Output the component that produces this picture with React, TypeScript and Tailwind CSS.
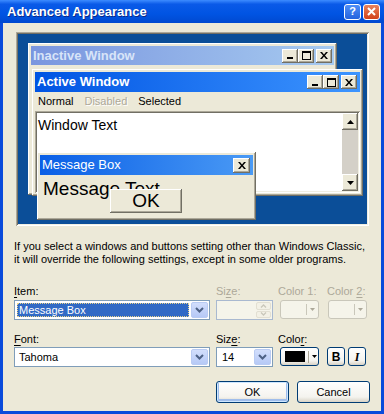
import React from 'react';

const raised =
  'shadow-[inset_-1px_-1px_0_#716f64,inset_1px_1px_0_#fff,inset_-2px_-2px_0_#aca899]';
const sunken =
  'shadow-[inset_1px_1px_0_#aca899,inset_-1px_-1px_0_#fff,inset_2px_2px_0_#716f64,inset_-2px_-2px_0_#f1efe2]';
const xpButton =
  'rounded-[3px] border border-[#003c74] bg-[linear-gradient(to_bottom,#ffffff,#f4f3ee_75%,#d8d3c6)] flex items-center justify-center';

function MinGlyph() {
  return (
    <svg width="8" height="7" viewBox="0 0 8 7">
      <rect x="1" y="5" width="6" height="2" fill="#000" />
    </svg>
  );
}

function MaxGlyph() {
  return (
    <svg width="9" height="9" viewBox="0 0 9 9">
      <path d="M0 0h9v9H0z M1 2h7v6H1z" fillRule="evenodd" fill="#000" />
    </svg>
  );
}

function CloseGlyph() {
  return (
    <svg width="8" height="7" viewBox="0 0 8 7">
      <path d="M0 0h2l2 2.4L6 0h2L5 3.5 8 7H6L4 4.6 2 7H0l3-3.5z" fill="#000" />
    </svg>
  );
}

function CapBtn({ children, className = '' }: { children: React.ReactNode; className?: string }) {
  return (
    <div className={`w-[16px] h-[14px] bg-[#ece9d8] ${raised} flex items-center justify-center ${className}`}>
      {children}
    </div>
  );
}

function Chevron() {
  return (
    <svg width="9" height="6" viewBox="0 0 9 6">
      <path d="M1 1l3.5 3.5L8 1" stroke="#4d6185" strokeWidth="2" fill="none" />
    </svg>
  );
}

function DropBtn() {
  return (
    <div className="w-[17px] h-[16px] m-[1px] rounded-[2px] border border-[#b9cbf3] bg-[linear-gradient(to_bottom,#d2defc,#b6c9f6)] flex items-center justify-center">
      <Chevron />
    </div>
  );
}

function U({ children }: { children: React.ReactNode }) {
  return <span className="underline underline-offset-2">{children}</span>;
}

export default function App() {
  return (
    <div className="w-[384px] h-[414px] flex flex-col bg-[#0a4bdb] font-['Liberation_Sans',Arial,sans-serif] overflow-hidden">
      {/* title bar */}
      <div className="h-[23px] flex items-center pl-[7px] pr-[4px] bg-[linear-gradient(to_bottom,#3d8cff_0%,#0a5ae8_18%,#0054e3_60%,#0049d0_100%)]">
        <span className="text-white text-[13px] font-bold [text-shadow:1px_1px_0_#0a2a8a]">Advanced Appearance</span>
        <div className="ml-auto flex gap-[2px]">
          <div className="w-[17px] h-[16px] rounded-[3px] border border-white bg-[linear-gradient(to_bottom,#4f8ef7,#2463de)] flex items-center justify-center text-white text-[11px] font-bold">
            ?
          </div>
          <div className="w-[17px] h-[16px] rounded-[3px] border border-white bg-[linear-gradient(to_bottom,#e8825c,#d2421b)] flex items-center justify-center">
            <svg width="9" height="9" viewBox="0 0 9 9">
              <path d="M1 1l7 7M8 1L1 8" stroke="#fff" strokeWidth="2" />
            </svg>
          </div>
        </div>
      </div>

      {/* body */}
      <div className="flex-1 mx-[3px] mb-[3px] bg-[#ece9d8] flex flex-col text-[11px] text-black">
        {/* preview */}
        <div className={`relative ml-[13px] mt-[9px] w-[353px] h-[194px] bg-[#0b4e98] ${sunken}`}>
          {/* inactive window */}
          <div className={`absolute left-[12px] top-[11px] w-[309px] h-[152px] bg-[#ece9d8] p-[3px] ${raised}`}>
            <div className="h-[19px] flex items-center pl-[2px] pr-[2px] bg-[linear-gradient(to_right,#7a96df,#a6caf0)]">
              <span className="text-[#d8e4f8] text-[13px] font-bold">Inactive Window</span>
              <div className="ml-auto flex items-center">
                <CapBtn>
                  <MinGlyph />
                </CapBtn>
                <CapBtn>
                  <MaxGlyph />
                </CapBtn>
                <CapBtn className="ml-[2px]">
                  <CloseGlyph />
                </CapBtn>
              </div>
            </div>
          </div>

          {/* active window */}
          <div className={`absolute left-[16px] top-[37px] w-[331px] h-[127px] bg-[#ece9d8] p-[3px] flex flex-col ${raised}`}>
            <div className="h-[20px] flex items-center pl-[2px] pr-[3px] bg-[linear-gradient(to_right,#0054e3,#3d95ff)]">
              <span className="text-white text-[13px] font-bold">Active Window</span>
              <div className="ml-auto flex items-center">
                <CapBtn>
                  <MinGlyph />
                </CapBtn>
                <CapBtn>
                  <MaxGlyph />
                </CapBtn>
                <CapBtn className="ml-[2px]">
                  <CloseGlyph />
                </CapBtn>
              </div>
            </div>
            <div className="h-[19px] flex items-center gap-[11px] pl-[3px] text-[11px]">
              <span>Normal</span>
              <span className="text-[#aca899] [text-shadow:1px_1px_0_#fff]">Disabled</span>
              <span>Selected</span>
            </div>
            <div className={`flex-1 bg-white p-[2px] flex ${sunken}`}>
              <div className="flex-1 pl-[1px] pt-[4px] text-[14px] leading-[17px]">Window Text</div>
              <div className="w-[16px] flex flex-col bg-[#d4d0c8]">
                <div className={`h-[17px] bg-[#ece9d8] ${raised} flex items-center justify-center`}>
                  <svg width="7" height="4" viewBox="0 0 7 4">
                    <path d="M3.5 0L7 4H0z" fill="#000" />
                  </svg>
                </div>
                <div className="flex-1" />
                <div className={`h-[17px] bg-[#ece9d8] ${raised} flex items-center justify-center`}>
                  <svg width="7" height="4" viewBox="0 0 7 4">
                    <path d="M0 0h7L3.5 4z" fill="#000" />
                  </svg>
                </div>
              </div>
            </div>
          </div>

          {/* message box */}
          <div className={`absolute left-[21px] top-[120px] w-[219px] h-[68px] bg-[#ece9d8] p-[3px] flex flex-col ${raised}`}>
            <div className="h-[20px] flex items-center pl-[2px] pr-[3px] bg-[linear-gradient(to_right,#0a5fe6,#4a9af5)]">
              <span className="text-white text-[13px]">Message Box</span>
              <CapBtn className="ml-auto w-[17px] h-[15px]">
                <CloseGlyph />
              </CapBtn>
            </div>
            <div className="relative flex-1">
              <div className="pl-[3px] pt-[3px] text-[19px] leading-[22px]">Message Text</div>
              <div className={`absolute left-[70px] top-[14px] w-[72px] h-[24px] bg-[#ece9d8] ${raised} flex items-center justify-center text-[19px]`}>
                OK
              </div>
            </div>
          </div>
        </div>

        {/* info text */}
        <p className="mt-[14px] pl-[11px] leading-[13px]">
          If you select a windows and buttons setting other than Windows Classic,
          <br />
          it will override the following settings, except in some older programs.
        </p>

        {/* row 1 */}
        <div className="mt-[19px] pl-[11px] flex">
          <div className="w-[196px]">
            <div className="leading-[13px]">
              <U>I</U>tem:
            </div>
            <div className="mt-[2px] h-[20px] border border-[#7f9db9] bg-white flex items-center">
              <div className="flex-1 ml-[2px] mr-[1px] h-[14px] bg-[#316ac5] text-white border border-dotted border-[#e8d38a] flex items-center pl-[1px] leading-none">
                Message Box
              </div>
              <DropBtn />
            </div>
          </div>
          <div className="ml-[6px] w-[57px]">
            <div className="leading-[13px] text-[#aca899]">
              Si<U>z</U>e:
            </div>
            <div className="mt-[2px] h-[20px] border border-[#a9b9d0] bg-[#f5f4ea] flex justify-end">
              <div className="w-[15px] m-[1px] flex flex-col gap-[1px]">
                <div className="flex-1 rounded-[2px] bg-[#f3f1e6] border border-[#e2dfd2] flex items-center justify-center">
                  <svg width="7" height="4" viewBox="0 0 7 4">
                    <path d="M1 3.5l2.5-2.5L6 3.5" stroke="#c9c7ba" strokeWidth="1.3" fill="none" />
                  </svg>
                </div>
                <div className="flex-1 rounded-[2px] bg-[#f3f1e6] border border-[#e2dfd2] flex items-center justify-center">
                  <svg width="7" height="4" viewBox="0 0 7 4">
                    <path d="M1 0.5l2.5 2.5L6 0.5" stroke="#c9c7ba" strokeWidth="1.3" fill="none" />
                  </svg>
                </div>
              </div>
            </div>
          </div>
          <div className="ml-[5px] w-[48px]">
            <div className="leading-[13px] text-[#aca899]">Color 1:</div>
            <div className="ml-[2px] mt-[2px] w-[39px] h-[19px] rounded-[3px] border border-[#c9c7ba] bg-[#f5f4ea] flex items-center justify-end pr-[3px]">
              <div className="w-[1px] h-[11px] bg-[#c9c7ba] mr-[3px]" />
              <svg width="5" height="3" viewBox="0 0 5 3">
                <path d="M0 0h5L2.5 3z" fill="#aca899" />
              </svg>
            </div>
          </div>
          <div className="ml-[1px] w-[41px]">
            <div className="leading-[13px] text-[#aca899]">
              Color <U>2</U>:
            </div>
            <div className="ml-[1px] mt-[2px] w-[39px] h-[19px] rounded-[3px] border border-[#c9c7ba] bg-[#f5f4ea] flex items-center justify-end pr-[3px]">
              <div className="w-[1px] h-[11px] bg-[#c9c7ba] mr-[3px]" />
              <svg width="5" height="3" viewBox="0 0 5 3">
                <path d="M0 0h5L2.5 3z" fill="#aca899" />
              </svg>
            </div>
          </div>
        </div>

        {/* row 2 */}
        <div className="mt-[13px] pl-[11px] flex">
          <div className="w-[196px]">
            <div className="leading-[13px]">
              <U>F</U>ont:
            </div>
            <div className="mt-[1px] h-[20px] border border-[#7f9db9] bg-white flex items-center">
              <div className="flex-1 pl-[4px]">Tahoma</div>
              <DropBtn />
            </div>
          </div>
          <div className="ml-[6px] w-[57px]">
            <div className="leading-[13px]">
              Siz<U>e</U>:
            </div>
            <div className="mt-[1px] h-[20px] border border-[#7f9db9] bg-white flex items-center">
              <div className="flex-1 pl-[5px]">14</div>
              <DropBtn />
            </div>
          </div>
          <div className="ml-[5px] flex flex-col">
            <div className="leading-[13px]">
              Colo<U>r</U>:
            </div>
            <div className="mt-[1px] flex items-center">
              <div className={`ml-[2px] w-[39px] h-[19px] ${xpButton} justify-start pl-[4px]`}>
                <div className="w-[20px] h-[11px] bg-black" />
                <div className="w-[1px] h-[12px] bg-[#aca899] ml-[3px] mr-[3px]" />
                <svg width="5" height="3" viewBox="0 0 5 3">
                  <path d="M0 0h5L2.5 3z" fill="#000" />
                </svg>
              </div>
              <div className={`ml-[8px] w-[18px] h-[19px] ${xpButton} font-bold text-[12px]`}>B</div>
              <div className={`ml-[3px] w-[18px] h-[19px] ${xpButton} font-bold italic text-[12px] font-['Liberation_Serif',serif]`}>
                I
              </div>
            </div>
          </div>
        </div>

        {/* buttons */}
        <div className="mt-[14px] pl-[213px] flex">
          <div className={`w-[73px] h-[22px] ${xpButton} shadow-[inset_0_0_0_1px_#cee7ff,inset_0_-1px_0_2px_#9fbdeb]`}>OK</div>
          <div className={`ml-[8px] w-[73px] h-[22px] ${xpButton}`}>Cancel</div>
        </div>
      </div>
    </div>
  );
}
